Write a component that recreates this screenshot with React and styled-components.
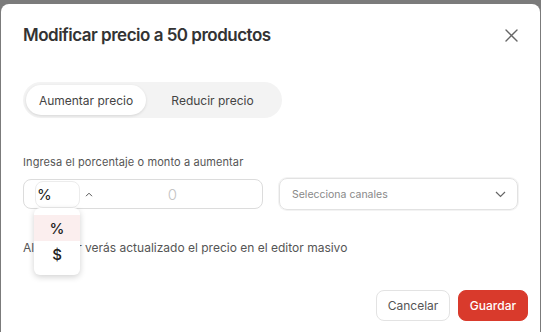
import React from "react";
import styled, { createGlobalStyle } from "styled-components";

const Global = createGlobalStyle`
  html, body { margin: 0; padding: 0; background: #7b7b7b; }
  body { font-family: Inter, "Noto Sans", sans-serif; -webkit-font-smoothing: antialiased; }
  * { box-sizing: border-box; }
`;

const Overlay = styled.div`
  width: 541px;
  height: 332px;
  overflow: hidden;
  padding: 4px 1px 0 1px;
`;

const Modal = styled.div`
  background: #fff;
  border-radius: 8px 8px 0 0;
  height: 340px;
  padding: 19px 22px 0 22px;
  display: flex;
  flex-direction: column;
`;

const Header = styled.div`
  display: flex;
  align-items: center;
  justify-content: space-between;
  height: 24px;
`;

const Title = styled.h2`
  margin: 0;
  font-size: 17px;
  font-weight: 600;
  color: #333;
  letter-spacing: -0.5px;
`;

const Close = styled.button`
  border: 0;
  background: none;
  padding: 0;
  margin-right: 0;
  display: flex;
  color: #666;
`;

const Segmented = styled.div`
  margin-top: 35px;
  align-self: flex-start;
  display: flex;
  height: 36px;
  padding: 3px;
  border-radius: 18px;
  background: #f3f3f3;
`;

const Segment = styled.div`
  width: ${(p) => p.$w}px;
  display: flex;
  align-items: center;
  justify-content: center;
  border-radius: 15px;
  font-size: 12px;
  color: #444;
  background: ${(p) => (p.$active ? "#fff" : "transparent")};
  box-shadow: ${(p) => (p.$active ? "0 1px 3px rgba(0,0,0,0.12)" : "none")};
`;

const Label = styled.div`
  margin-top: 37px;
  font-size: 11px;
  line-height: 14px;
  letter-spacing: 0.1px;
  color: #555;
`;

const Row = styled.div`
  margin-top: 9px;
  display: flex;
  align-items: center;
  gap: 16px;
`;

const InputGroup = styled.div`
  position: relative;
  width: 240px;
  height: 30px;
  border: 1px solid #dcdcdc;
  border-radius: 8px;
  display: flex;
  align-items: center;
  padding-left: 11px;
`;

const TypeSelect = styled.div`
  width: 45px;
  height: 27px;
  border: 1px solid #ececec;
  border-radius: 8px;
  display: flex;
  align-items: center;
  padding-left: 1px;
  font-size: 15px;
  color: #222;
`;

const Chevron = styled.span`
  display: flex;
  margin-left: 5px;
  color: #555;
`;

const Amount = styled.div`
  flex: 1;
  text-align: center;
  font-size: 15px;
  font-weight: 300;
  color: #c4c4c4;
  padding-right: 10px;
`;

const Menu = styled.div`
  position: absolute;
  left: 10px;
  top: 28px;
  width: 46px;
  padding: 7px 0 8px;
  background: #fff;
  border-radius: 6px;
  box-shadow: 0 2px 6px rgba(0,0,0,0.18);
  z-index: 2;
`;

const MenuItem = styled.div`
  height: 26px;
  display: flex;
  align-items: center;
  justify-content: center;
  font-size: 15px;
  font-weight: 500;
  color: #222;
  background: ${(p) => (p.$active ? "#fbeeee" : "#fff")};
`;

const ChannelSelect = styled.div`
  flex: 1;
  height: 32px;
  border: 1px solid #e2e2e2;
  box-shadow: 0 0 0 1px #f3f3f3;
  border-radius: 8px;
  display: flex;
  align-items: center;
  justify-content: space-between;
  padding: 0 11px 0 12px;
  font-size: 10.5px;
  color: #888;
`;

const Info = styled.p`
  margin: 30px 0 0;
  font-size: 12px;
  line-height: 16px;
  color: #555;
`;

const Footer = styled.div`
  margin-top: 34px;
  margin-right: -10px;
  display: flex;
  justify-content: flex-end;
  gap: 8px;
`;

const Button = styled.button`
  height: 31px;
  width: ${(p) => p.$w}px;
  border-radius: 8px;
  font-family: inherit;
  font-size: 12px;
  font-weight: ${(p) => (p.$primary ? 500 : 400)};
  border: 1px solid ${(p) => (p.$primary ? "#d93a2c" : "#e3e3e3")};
  background: ${(p) => (p.$primary ? "#d93a2c" : "#fff")};
  color: ${(p) => (p.$primary ? "#fff" : "#555")};
`;

export default function App() {
  return (
    <>
      <Global />
      <Overlay>
        <Modal>
          <Header>
            <Title>Modificar precio a 50 productos</Title>
            <Close>
              <svg width="13" height="13" viewBox="0 0 13 13">
                <path d="M1 1 L12 12 M12 1 L1 12" stroke="currentColor" strokeWidth="1.4" strokeLinecap="round" />
              </svg>
            </Close>
          </Header>
          <Segmented>
            <Segment $active $w={120}>Aumentar precio</Segment>
            <Segment $w={133}>Reducir precio</Segment>
          </Segmented>
          <Label>Ingresa el porcentaje o monto a aumentar</Label>
          <Row>
            <InputGroup>
              <TypeSelect>%</TypeSelect>
              <Chevron>
                <svg width="8" height="5" viewBox="0 0 8 5">
                  <path d="M1 4.2 L4 1.2 L7 4.2" fill="none" stroke="currentColor" strokeWidth="1" />
                </svg>
              </Chevron>
              <Amount>0</Amount>
              <Menu>
                <MenuItem $active>%</MenuItem>
                <MenuItem>$</MenuItem>
              </Menu>
            </InputGroup>
            <ChannelSelect>
              <span>Selecciona canales</span>
              <svg width="11" height="7" viewBox="0 0 11 7">
                <path d="M1 1 L5.5 5.5 L10 1" fill="none" stroke="#666" strokeWidth="1.2" />
              </svg>
            </ChannelSelect>
          </Row>
          <Info>Al guardar verás actualizado el precio en el editor masivo</Info>
          <Footer>
            <Button $w={74}>Cancelar</Button>
            <Button $primary $w={70}>Guardar</Button>
          </Footer>
        </Modal>
      </Overlay>
    </>
  );
}
